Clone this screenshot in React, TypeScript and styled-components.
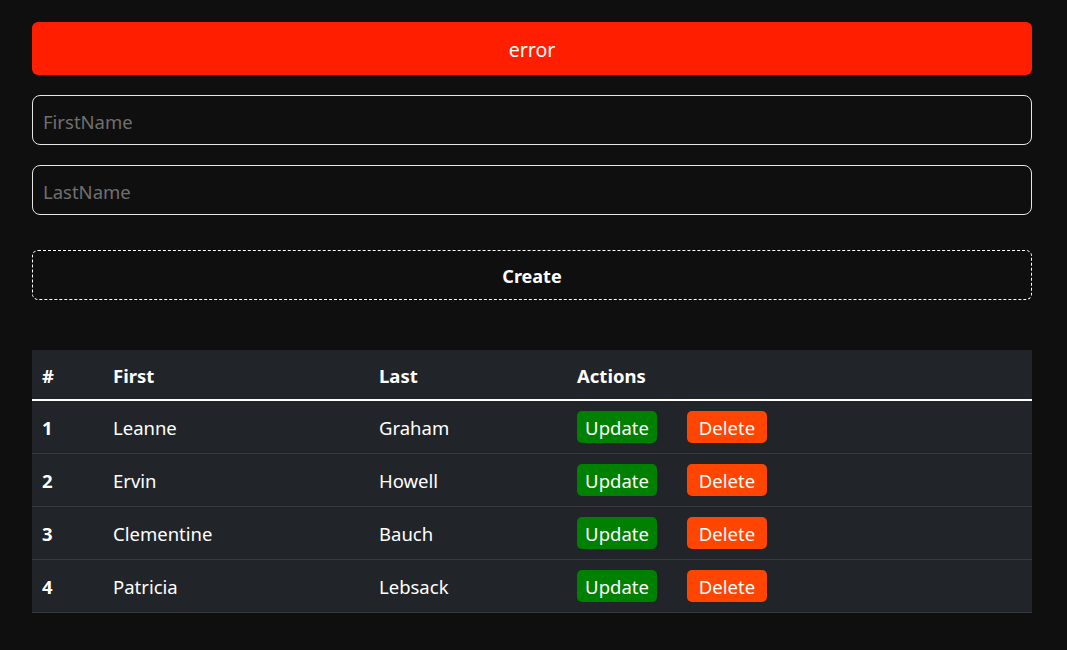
import React from 'react'
import styled, { createGlobalStyle } from 'styled-components'

const GlobalStyle = createGlobalStyle`
  body {
    margin: 0;
    background: #0f0f0f;
    font-family: 'Noto Sans', 'Open Sans', sans-serif;
    color: #fff;
  }
`

const Page = styled.div`
  width: 1000px;
  padding: 22px 32px 38px;
  display: flex;
  flex-direction: column;
`

const ErrorBox = styled.div`
  box-sizing: border-box;
  height: 53px;
  padding-top: 2px;
  border-radius: 6px;
  background: #ff1f00;
  color: #fff;
  font-size: 19.5px;
  display: flex;
  align-items: center;
  justify-content: center;
  margin-bottom: 20px;
`

const Input = styled.input`
  box-sizing: border-box;
  width: 100%;
  height: 50px;
  margin-bottom: 20px;
  padding: 3px 10px 0;
  background: #0f0f0f;
  border: 1px solid #e6e6e6;
  border-radius: 8px;
  color: #fff;
  font-family: inherit;
  font-size: 18.5px;
  outline: none;

  &::placeholder {
    color: #6f6f6f;
  }
`

const CreateButton = styled.button`
  box-sizing: border-box;
  width: 100%;
  height: 50px;
  margin-top: 15px;
  margin-bottom: 50px;
  padding-top: 2px;
  background: transparent;
  border: 1px dashed #fff;
  border-radius: 6px;
  color: #fff;
  font-family: inherit;
  font-weight: 700;
  font-size: 18px;
`

const Table = styled.table`
  width: 100%;
  border-collapse: collapse;
  background: #212529;
  font-size: 18.5px;
`

const HeadCell = styled.th<{ width?: number }>`
  box-sizing: border-box;
  height: 50px;
  padding: 2px 10px 0;
  text-align: left;
  font-weight: 700;
  border-bottom: 2px solid #fff;
  width: ${({ width }) => (width ? `${width}px` : 'auto')};
`

const Row = styled.tr`
  border-bottom: 1px solid #373b3e;
`

const Cell = styled.td<{ bold?: boolean }>`
  box-sizing: border-box;
  height: 53px;
  padding: 1px 10px 0;
  font-weight: ${({ bold }) => (bold ? 700 : 400)};
`

const Actions = styled.div`
  display: flex;
  gap: 30px;
`

const ActionButton = styled.button<{ kind: 'update' | 'delete' }>`
  width: 80px;
  height: 32px;
  padding: 1px 0 0;
  border: none;
  border-radius: 5px;
  background: ${({ kind }) => (kind === 'update' ? '#008000' : '#ff4500')};
  color: #fff;
  font-family: inherit;
  font-size: 18.5px;
`

const users = [
  { id: 1, first: 'Leanne', last: 'Graham' },
  { id: 2, first: 'Ervin', last: 'Howell' },
  { id: 3, first: 'Clementine', last: 'Bauch' },
  { id: 4, first: 'Patricia', last: 'Lebsack' },
]

export default function App() {
  return (
    <>
      <GlobalStyle />
      <Page>
        <ErrorBox>error</ErrorBox>
        <Input placeholder="FirstName" />
        <Input placeholder="LastName" />
        <CreateButton>Create</CreateButton>
        <Table>
          <thead>
            <tr>
              <HeadCell width={71}>#</HeadCell>
              <HeadCell width={266}>First</HeadCell>
              <HeadCell width={198}>Last</HeadCell>
              <HeadCell>Actions</HeadCell>
            </tr>
          </thead>
          <tbody>
            {users.map((u) => (
              <Row key={u.id}>
                <Cell bold>{u.id}</Cell>
                <Cell>{u.first}</Cell>
                <Cell>{u.last}</Cell>
                <Cell>
                  <Actions>
                    <ActionButton kind="update">Update</ActionButton>
                    <ActionButton kind="delete">Delete</ActionButton>
                  </Actions>
                </Cell>
              </Row>
            ))}
          </tbody>
        </Table>
      </Page>
    </>
  )
}
